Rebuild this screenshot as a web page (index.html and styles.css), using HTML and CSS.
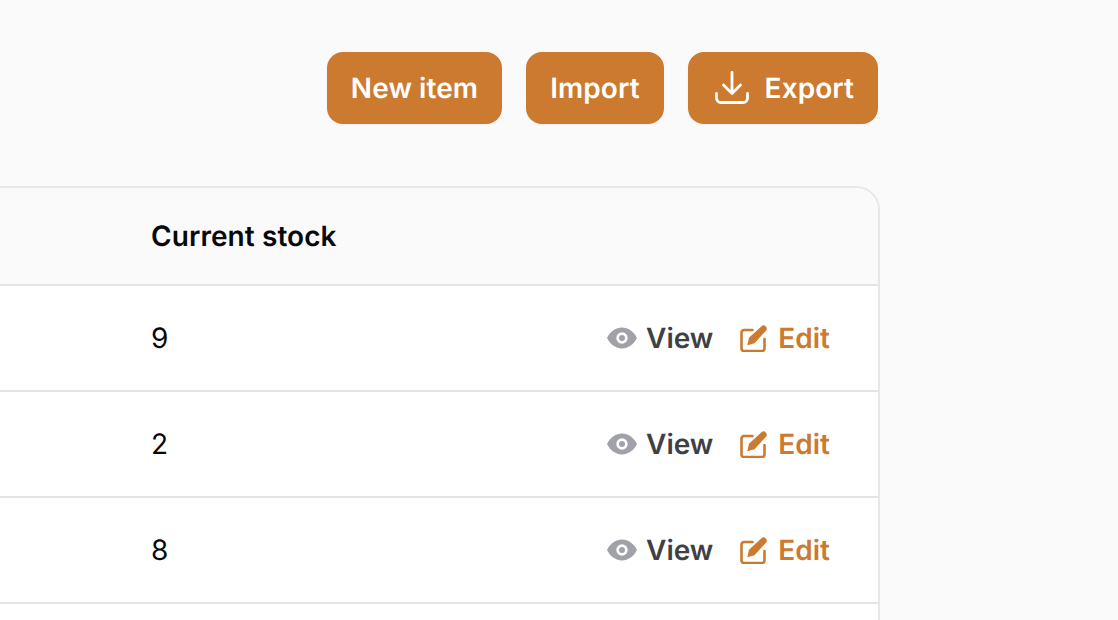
FILE: index.html
```html
<!DOCTYPE html>
<html lang="en">
<head>
<meta charset="utf-8">
<title>Items</title>
<link rel="stylesheet" href="styles.css">
</head>
<body>
<main class="page">
  <div class="toolbar">
    <button class="btn">New item</button>
    <button class="btn">Import</button>
    <button class="btn btn-icon">
      <svg class="icon-dl" viewBox="0 0 36 36" fill="none" stroke="currentColor" stroke-width="2.8" stroke-linecap="round" stroke-linejoin="round"><path d="M18 2.500v20.500M9.500 15l8.500 8.500 8.500-8.500M2.500 23.500v4.500a4.500 4.500 0 0 0 4.500 4.500h22a4.500 4.500 0 0 0 4.500-4.500v-4.500"/></svg>
      Export
    </button>
  </div>
  <section class="card">
    <div class="head"><span class="col">Current stock</span></div>
    <div class="row">
      <span class="col num">9</span>
      <span class="actions">
        <a class="act view"><svg class="icon-eye" viewBox="0 0 30 22"><path fill-rule="evenodd" d="M0 11C3.300 4.300 9 .6 15 .6S26.700 4.300 30 11C26.700 17.700 21 21.400 15 21.400S3.300 17.700 0 11zM15 5.300a5.700 5.700 0 1 0 0 11.400 5.700 5.700 0 0 0 0-11.400z"/><circle cx="15" cy="11" r="3"/></svg>View</a>
        <a class="act edit"><svg class="icon-edit" viewBox="0 0 27 27"><path class="box" d="M12.500 5H4a2.500 2.500 0 0 0-2.500 2.500v16A2.500 2.500 0 0 0 4 26h18a2.500 2.500 0 0 0 2.500-2.500V14"/><path class="pen" d="M21.500 1.200a3.200 3.200 0 0 1 4.500 4.500L14.500 18.200 7.300 20.300 9 12.800z"/></svg>Edit</a>
      </span>
    </div>
    <div class="row">
      <span class="col num">2</span>
      <span class="actions">
        <a class="act view"><svg class="icon-eye" viewBox="0 0 30 22"><path fill-rule="evenodd" d="M0 11C3.300 4.300 9 .6 15 .6S26.700 4.300 30 11C26.700 17.700 21 21.400 15 21.400S3.300 17.700 0 11zM15 5.300a5.700 5.700 0 1 0 0 11.400 5.700 5.700 0 0 0 0-11.400z"/><circle cx="15" cy="11" r="3"/></svg>View</a>
        <a class="act edit"><svg class="icon-edit" viewBox="0 0 27 27"><path class="box" d="M12.500 5H4a2.500 2.500 0 0 0-2.500 2.500v16A2.500 2.500 0 0 0 4 26h18a2.500 2.500 0 0 0 2.500-2.500V14"/><path class="pen" d="M21.500 1.200a3.200 3.200 0 0 1 4.500 4.500L14.500 18.200 7.300 20.300 9 12.800z"/></svg>Edit</a>
      </span>
    </div>
    <div class="row">
      <span class="col num">8</span>
      <span class="actions">
        <a class="act view"><svg class="icon-eye" viewBox="0 0 30 22"><path fill-rule="evenodd" d="M0 11C3.300 4.300 9 .6 15 .6S26.700 4.300 30 11C26.700 17.700 21 21.400 15 21.400S3.300 17.700 0 11zM15 5.300a5.700 5.700 0 1 0 0 11.400 5.700 5.700 0 0 0 0-11.400z"/><circle cx="15" cy="11" r="3"/></svg>View</a>
        <a class="act edit"><svg class="icon-edit" viewBox="0 0 27 27"><path class="box" d="M12.500 5H4a2.500 2.500 0 0 0-2.500 2.500v16A2.500 2.500 0 0 0 4 26h18a2.500 2.500 0 0 0 2.500-2.500V14"/><path class="pen" d="M21.500 1.200a3.200 3.200 0 0 1 4.500 4.500L14.500 18.200 7.300 20.300 9 12.800z"/></svg>Edit</a>
      </span>
    </div>
    <div class="row"></div>
  </section>
</main>
</body>
</html>
```
FILE: styles.css
```css
* { box-sizing: border-box; }
html, body { margin: 0; height: 100%; overflow: hidden; }
body { background: #fafafa; font-family: Inter, "Liberation Sans", sans-serif; color: #09090b; text-rendering: geometricPrecision; }
.page { width: 880px; padding-top: 52px; }
.toolbar { display: flex; justify-content: flex-end; gap: 24px; padding-right: 2px; }
.btn {
  height: 72px; padding: 0 24px; border: 0; border-radius: 16px;
  background: #cb7a2f; color: #fff; font: 600 28px Inter, sans-serif; text-rendering: geometricPrecision;
  letter-spacing: .08px;
  display: flex; align-items: center; gap: 15px;
  box-shadow: 0 1px 2px rgba(0,0,0,.05);
}
.btn-icon { padding-left: 26px; }
.icon-dl { width: 36px; height: 36px; }
.card {
  margin: 62px 0 0 -20px; width: 900px;
  border: 2px solid #e7e7e8; border-radius: 24px 24px 0 0; background: #fff;
}
.head {
  height: 98px; background: #fafafa; border-radius: 22px 22px 0 0;
  border-bottom: 2px solid #e4e4e7; display: flex; align-items: center;
  font-weight: 600; font-size: 28px; letter-spacing: .08px;
}
.col { margin-left: 169px; }
.row {
  height: 106px; border-bottom: 2px solid #e4e4e7;
  display: flex; align-items: center; justify-content: space-between; padding-right: 48px;
  font-size: 28px;
}
.actions { display: flex; gap: 27px; font-weight: 600; }
.act { display: flex; align-items: center; gap: 9px; font-size: 28px; }
.edit { gap: 11px; color: #cb7a2f; }
.view { color: #3f3f46; }
.icon-eye { width: 30px; height: 22px; fill: #a1a1aa; }
.icon-edit { width: 27px; height: 27px; }
.box { fill: none; stroke: #cb7a2f; stroke-width: 2.6; stroke-linecap: round; stroke-linejoin: round; }
.pen { fill: #cb7a2f; }
```
